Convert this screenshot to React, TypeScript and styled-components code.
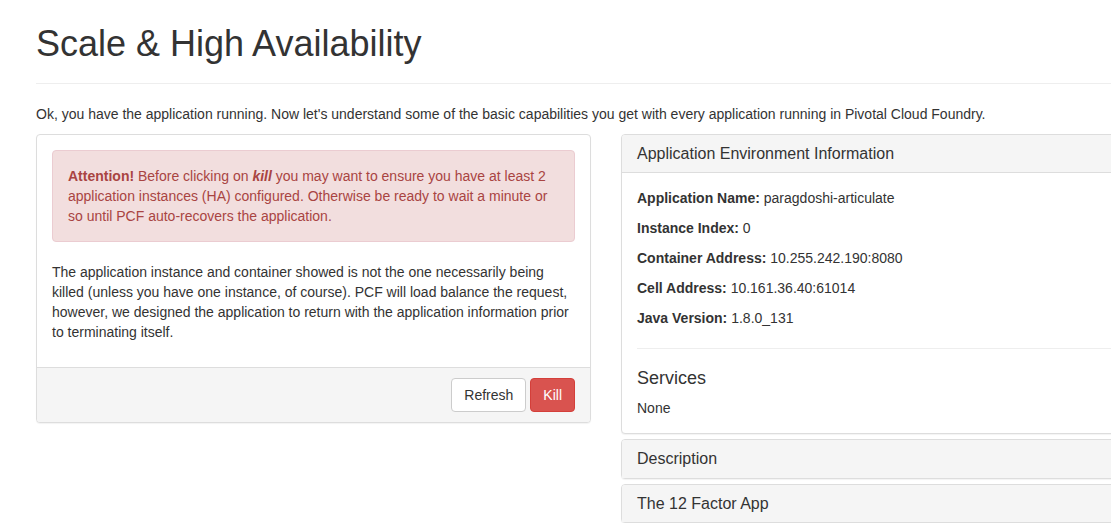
import React from "react";
import styled, { createGlobalStyle } from "styled-components";

const GlobalStyle = createGlobalStyle`
  html, body {
    margin: 0;
    padding: 0;
    background: #fff;
    overflow: hidden;
  }
  body {
    font-family: "Liberation Sans", Arial, Helvetica, sans-serif;
    font-size: 14px;
    line-height: 1.42857143;
    color: #333;
  }
  * { box-sizing: border-box; }
`;

const Page = styled.div`
  width: 1176px;
  padding: 24px 0 0 36px;
`;

const PageHeader = styled.div`
  padding-bottom: 9px;
  margin-bottom: 20px;
  border-bottom: 1px solid #eee;
`;

const Title = styled.h1`
  margin: 0 0 10px;
  font-size: 36px;
  font-weight: 500;
  line-height: 1.1;
  color: #333;
`;

const Para = styled.p<{ $last?: boolean }>`
  margin: 0 0 ${(p) => (p.$last ? "0" : "10px")};
`;

const Row = styled.div`
  display: grid;
  grid-template-columns: 555px 555px;
  column-gap: 30px;
  align-items: start;
`;

const Panel = styled.div`
  background: #fff;
  border: 1px solid #ddd;
  border-radius: 4px;
  box-shadow: 0 1px 1px rgba(0, 0, 0, 0.05);
`;

const PanelBody = styled.div`
  padding: 15px;
`;

const Alert = styled.div`
  padding: 15px;
  margin-bottom: 20px;
  border: 1px solid #ebccd1;
  border-radius: 4px;
  background: #f2dede;
  color: #a94442;
`;

const PanelFooter = styled.div`
  display: flex;
  justify-content: flex-end;
  gap: 4px;
  padding: 10px 15px;
  background: #f5f5f5;
  border-top: 1px solid #ddd;
  border-bottom-left-radius: 3px;
  border-bottom-right-radius: 3px;
`;

const Button = styled.button<{ $danger?: boolean }>`
  display: inline-block;
  padding: 6px 12px;
  font-family: inherit;
  font-size: 14px;
  line-height: 1.42857143;
  border-radius: 4px;
  border: 1px solid ${(p) => (p.$danger ? "#d43f3a" : "#ccc")};
  background: ${(p) => (p.$danger ? "#d9534f" : "#fff")};
  color: ${(p) => (p.$danger ? "#fff" : "#333")};
  cursor: pointer;
`;

const PanelGroup = styled.div`
  display: flex;
  flex-direction: column;
  gap: 5px;
`;

const PanelHeading = styled.div<{ $open?: boolean }>`
  padding: 10px 15px;
  background: #f5f5f5;
  color: #333;
  border-top-left-radius: 3px;
  border-top-right-radius: 3px;
  border-bottom: ${(p) => (p.$open ? "1px solid #ddd" : "0")};
`;

const PanelTitle = styled.h4`
  margin: 0;
  font-size: 16px;
  font-weight: 500;
  line-height: 1.1;
`;

const Divider = styled.hr`
  margin: 20px 0;
  border: 0;
  border-top: 1px solid #eee;
`;

const SubTitle = styled.h4`
  margin: 0 0 9px;
  font-size: 18px;
  font-weight: 500;
  line-height: 1.1;
`;

const envInfo: [string, string][] = [
  ["Application Name:", "paragdoshi-articulate"],
  ["Instance Index:", "0"],
  ["Container Address:", "10.255.242.190:8080"],
  ["Cell Address:", "10.161.36.40:61014"],
  ["Java Version:", "1.8.0_131"],
];

export default function App() {
  return (
    <>
      <GlobalStyle />
      <Page>
        <PageHeader>
          <Title>Scale &amp; High Availability</Title>
        </PageHeader>
        <Para>
          Ok, you have the application running. Now let's understand some of the basic
          capabilities you get with every application running in Pivotal Cloud Foundry.
        </Para>
        <Row>
          <Panel>
            <PanelBody>
              <Alert>
                <strong>Attention!</strong> Before clicking on{" "}
                <strong>
                  <em>kill</em>
                </strong>{" "}
                you may want to ensure you have at least 2 application instances (HA)
                configured. Otherwise be ready to wait a minute or so until PCF
                auto-recovers the application.
              </Alert>
              <Para>
                The application instance and container showed is not the one necessarily
                being killed (unless you have one instance, of course). PCF will load
                balance the request, however, we designed the application to return with
                the application information prior to terminating itself.
              </Para>
            </PanelBody>
            <PanelFooter>
              <Button>Refresh</Button>
              <Button $danger>Kill</Button>
            </PanelFooter>
          </Panel>
          <PanelGroup>
            <Panel>
              <PanelHeading $open>
                <PanelTitle>Application Environment Information</PanelTitle>
              </PanelHeading>
              <PanelBody>
                {envInfo.map(([k, v]) => (
                  <Para key={k}>
                    <strong>{k}</strong> {v}
                  </Para>
                ))}
                <Divider />
                <SubTitle>Services</SubTitle>
                <div>None</div>
              </PanelBody>
            </Panel>
            <Panel>
              <PanelHeading>
                <PanelTitle>Description</PanelTitle>
              </PanelHeading>
            </Panel>
            <Panel>
              <PanelHeading>
                <PanelTitle>The 12 Factor App</PanelTitle>
              </PanelHeading>
            </Panel>
          </PanelGroup>
        </Row>
      </Page>
    </>
  );
}
